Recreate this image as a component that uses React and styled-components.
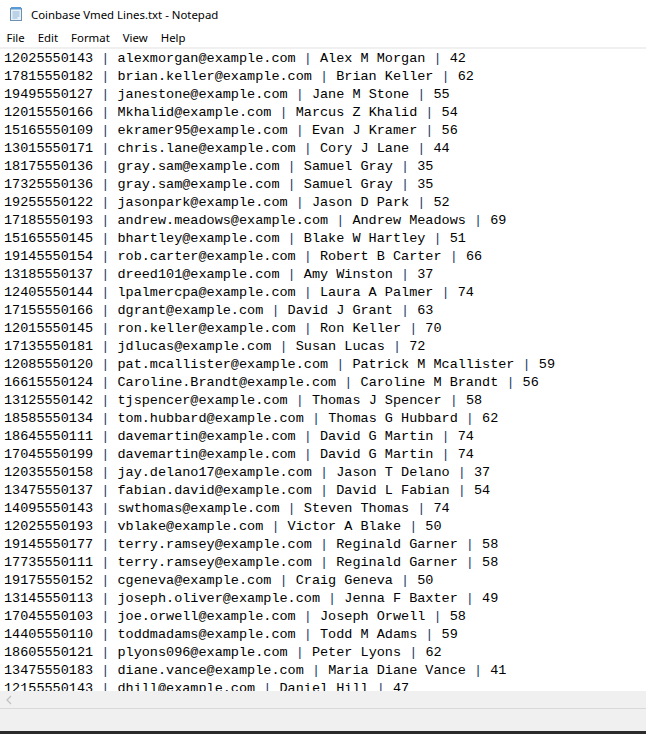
import React from 'react'
import styled, { createGlobalStyle } from 'styled-components'

const GlobalStyle = createGlobalStyle`
  html, body {
    margin: 0;
    padding: 0;
    background: #ffffff;
    overflow: hidden;
  }
`

const Window = styled.div`
  width: 646px;
  height: 734px;
  display: flex;
  flex-direction: column;
  background: #ffffff;
  font-family: "Segoe UI", "Noto Sans", "DejaVu Sans", sans-serif;
  overflow: hidden;
`

const TitleBar = styled.div`
  height: 28px;
  display: flex;
  align-items: center;
  padding-left: 8px;
  gap: 7px;
  font-size: 11.4px;
  color: #000;
`

const MenuBar = styled.div`
  height: 19px;
  display: flex;
  align-items: center;
  font-size: 11.4px;
  border-bottom: 2px solid #f0f0f0;
`

const MenuItem = styled.span`
  padding: 0 6.5px;
  line-height: 19px;
`

const Editor = styled.div`
  flex: 1;
  overflow: hidden;
  padding: 1px 0 0 4px;
  font-family: "Liberation Mono", "DejaVu Sans Mono", monospace;
  font-size: 13.5px;
  color: #000;
`

const Line = styled.div`
  height: 18px;
  line-height: 18px;
  white-space: pre;
`

const Pipe = styled.span`
  color: #1c3d66;
`

const HScroll = styled.div`
  height: 17px;
  background: #f0f0f0;
  display: flex;
  align-items: center;
  padding-left: 5px;
  border-bottom: 1px solid #d9d9d9;
  flex-shrink: 0;
`

const StatusBar = styled.div`
  height: 22px;
  background: #f0f0f0;
  flex-shrink: 0;
`

const Taskbar = styled.div`
  height: 3px;
  background: #2b2b2b;
  flex-shrink: 0;
`

const NotepadIcon = () => (
  <svg width="16" height="16" viewBox="0 0 16 16">
    <rect x="2.5" y="2.5" width="11" height="12" fill="#e8f1f8" stroke="#6d8fb0" />
    <rect x="3" y="1" width="10" height="2.5" fill="#5b9bd5" />
    <line x1="4.5" y1="6" x2="11.5" y2="6" stroke="#8fb3d3" />
    <line x1="4.5" y1="8" x2="11.5" y2="8" stroke="#8fb3d3" />
    <line x1="4.5" y1="10" x2="11.5" y2="10" stroke="#8fb3d3" />
    <line x1="4.5" y1="12" x2="9.5" y2="12" stroke="#8fb3d3" />
  </svg>
)

// placeholder rows (fictional data in the same shape as the original file)
const rows = [
  ['12025550143', 'alexmorgan@example.com', 'Alex M Morgan', 42],
  ['17815550182', 'brian.keller@example.com', 'Brian Keller', 62],
  ['19495550127', 'janestone@example.com', 'Jane M Stone', 55],
  ['12015550166', 'Mkhalid@example.com', 'Marcus Z Khalid', 54],
  ['15165550109', 'ekramer95@example.com', 'Evan J Kramer', 56],
  ['13015550171', 'chris.lane@example.com', 'Cory J Lane', 44],
  ['18175550136', 'gray.sam@example.com', 'Samuel Gray', 35],
  ['17325550136', 'gray.sam@example.com', 'Samuel Gray', 35],
  ['19255550122', 'jasonpark@example.com', 'Jason D Park', 52],
  ['17185550193', 'andrew.meadows@example.com', 'Andrew Meadows', 69],
  ['15165550145', 'bhartley@example.com', 'Blake W Hartley', 51],
  ['19145550154', 'rob.carter@example.com', 'Robert B Carter', 66],
  ['13185550137', 'dreed101@example.com', 'Amy Winston', 37],
  ['12405550144', 'lpalmercpa@example.com', 'Laura A Palmer', 74],
  ['17155550166', 'dgrant@example.com', 'David J Grant', 63],
  ['12015550145', 'ron.keller@example.com', 'Ron Keller', 70],
  ['17135550181', 'jdlucas@example.com', 'Susan Lucas', 72],
  ['12085550120', 'pat.mcallister@example.com', 'Patrick M Mcallister', 59],
  ['16615550124', 'Caroline.Brandt@example.com', 'Caroline M Brandt', 56],
  ['13125550142', 'tjspencer@example.com', 'Thomas J Spencer', 58],
  ['18585550134', 'tom.hubbard@example.com', 'Thomas G Hubbard', 62],
  ['18645550111', 'davemartin@example.com', 'David G Martin', 74],
  ['17045550199', 'davemartin@example.com', 'David G Martin', 74],
  ['12035550158', 'jay.delano17@example.com', 'Jason T Delano', 37],
  ['13475550137', 'fabian.david@example.com', 'David L Fabian', 54],
  ['14095550143', 'swthomas@example.com', 'Steven Thomas', 74],
  ['12025550193', 'vblake@example.com', 'Victor A Blake', 50],
  ['19145550177', 'terry.ramsey@example.com', 'Reginald Garner', 58],
  ['17735550111', 'terry.ramsey@example.com', 'Reginald Garner', 58],
  ['19175550152', 'cgeneva@example.com', 'Craig Geneva', 50],
  ['13145550113', 'joseph.oliver@example.com', 'Jenna F Baxter', 49],
  ['17045550103', 'joe.orwell@example.com', 'Joseph Orwell', 58],
  ['14405550110', 'toddmadams@example.com', 'Todd M Adams', 59],
  ['18605550121', 'plyons096@example.com', 'Peter Lyons', 62],
  ['13475550183', 'diane.vance@example.com', 'Maria Diane Vance', 41],
  ['12155550143', 'dhill@example.com', 'Daniel Hill', 47],
]

export default function App() {
  return (
    <>
      <GlobalStyle />
      <Window>
        <TitleBar>
          <NotepadIcon />
          <span>Coinbase Vmed Lines.txt - Notepad</span>
        </TitleBar>
        <MenuBar>
          {['File', 'Edit', 'Format', 'View', 'Help'].map((m) => (
            <MenuItem key={m}>{m}</MenuItem>
          ))}
        </MenuBar>
        <Editor>
          {rows.map(([phone, email, name, age], i) => (
            <Line key={i}>
              {phone} <Pipe>|</Pipe> {email} <Pipe>|</Pipe> {name} <Pipe>|</Pipe> {age}
            </Line>
          ))}
        </Editor>
        <HScroll>
          <svg width="8" height="10" viewBox="0 0 8 10">
            <path d="M6 1 L2 5 L6 9" fill="none" stroke="#c2c2c2" strokeWidth="1.3" />
          </svg>
        </HScroll>
        <StatusBar />
        <Taskbar />
      </Window>
    </>
  )
}
